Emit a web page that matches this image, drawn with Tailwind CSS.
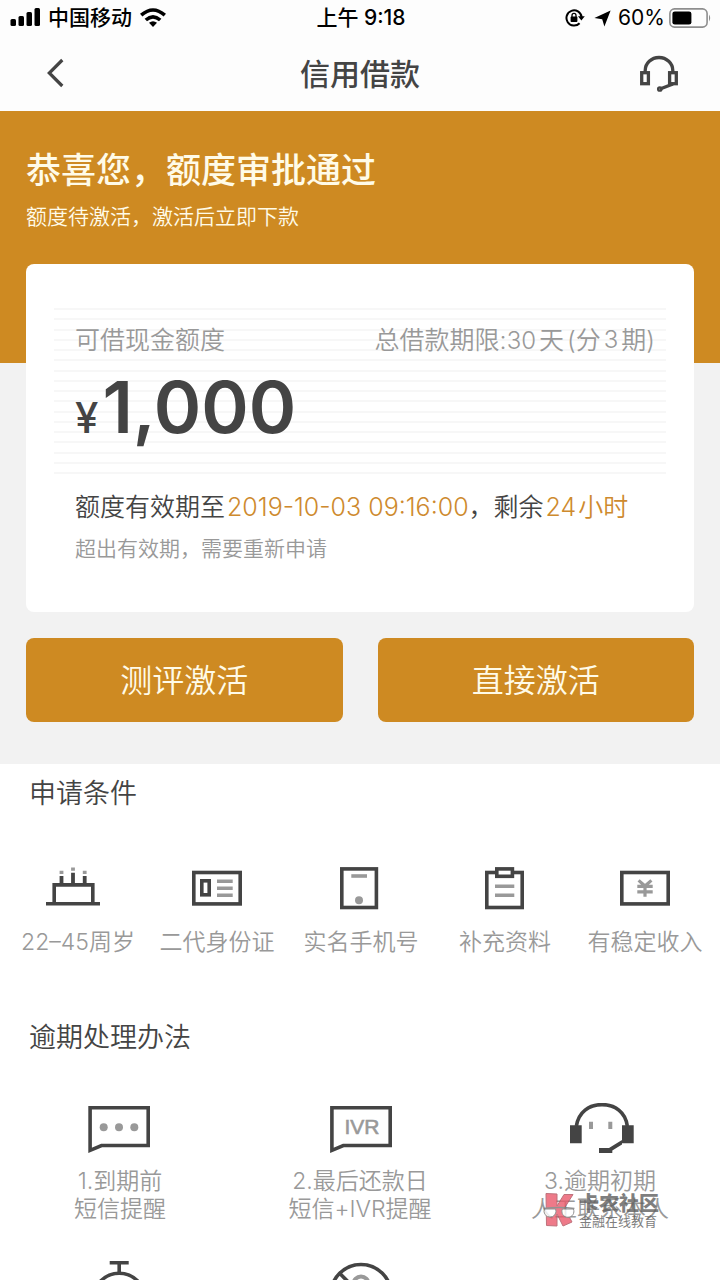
<!DOCTYPE html>
<html lang="zh-CN">
<head>
<meta charset="utf-8">
<meta name="viewport" content="width=device-width, initial-scale=1">
<title>信用借款</title>
<script src="https://cdn.jsdelivr.net/npm/@tailwindcss/browser@4"></script>
</head>
<body class="h-screen overflow-hidden bg-white font-['Inter','Noto_Sans_CJK_SC',sans-serif] font-[350] text-[#444]">

<!-- Status bar -->
<div class="grid h-[34px] grid-cols-3 items-center bg-[#fdfdfd] pt-[2px] pr-[8px] pl-[10px] text-[21px] leading-[28px] font-medium text-black">
  <div class="flex items-center gap-[7px]">
    <svg class="shrink-0" width="31" height="20" viewBox="0 0 31 20" aria-hidden="true">
      <rect x="0.5" y="11" width="5.5" height="7" rx="1.5"/><rect x="8.5" y="8" width="5.5" height="10" rx="1.5"/><rect x="16.5" y="4" width="5.5" height="14" rx="1.5"/><rect x="24.5" y="0" width="5.5" height="18" rx="1.5"/>
    </svg>
    <span class="whitespace-nowrap">中国移动</span>
    <svg class="shrink-0" width="28" height="20" viewBox="0 0 28 20" aria-hidden="true">
      <g fill="none" stroke="#000" stroke-width="3.6"><path d="M2.2 7.2 Q14 -3.2 25.8 7.2"/><path d="M6.8 12 Q14 5.6 21.2 12"/></g>
      <path d="M10 14.8 Q14 11.6 18 14.8 L14 19 Z"/>
    </svg>
  </div>
  <div class="text-center whitespace-nowrap">上午 9:18</div>
  <div class="flex items-center justify-end">
    <svg class="mr-[9px]" width="20" height="18" viewBox="0 0 20 18" aria-hidden="true">
      <path d="M14.6 14.2 A7.6 7.6 0 1 1 16.6 8" fill="none" stroke="#000" stroke-width="2"/>
      <path d="M13 7.2 H19.8 L16.4 11.6 Z"/>
      <rect x="5.6" y="7.6" width="6.8" height="5.4" rx="0.8"/>
      <path d="M7 8 V6.4 a2 2 0 0 1 4 0 V8" fill="none" stroke="#000" stroke-width="1.3"/>
    </svg>
    <svg class="mr-[7px]" width="17" height="17" viewBox="0 0 17 17" aria-hidden="true"><path d="M16.6 0.4 L10.4 16.6 L8.2 9.2 L0.4 8 Z"/></svg>
    <span class="font-normal">60%</span>
    <svg class="ml-[4px]" width="43" height="20" viewBox="0 0 43 20" aria-hidden="true">
      <rect x="0.9" y="0.9" width="37.2" height="18.2" rx="4.6" fill="none" stroke="#8e8e8e" stroke-width="1.6"/>
      <rect x="3.4" y="3.4" width="19" height="13.2" rx="2.4"/>
      <path d="M40 6.6 Q42.4 10 40 13.4 Z" fill="#8e8e8e"/>
    </svg>
  </div>
</div>

<!-- Navigation bar -->
<header class="flex h-[77px] items-center justify-between bg-[#fdfdfd] px-[41px]">
  <button type="button" aria-label="返回" class="w-[40px]">
    <svg width="30" height="30" viewBox="0 0 30 30"><path d="M21.3 2 L8.3 15 L21.3 28" fill="none" stroke="#444" stroke-width="3.2"/></svg>
  </button>
  <h1 class="pt-[2px] text-[30px] leading-[40px] font-medium">信用借款</h1>
  <button type="button" aria-label="客服">
    <svg width="40" height="38" viewBox="0 0 40 38" fill="none" stroke="#444" stroke-width="3.3">
      <rect x="2.7" y="18.7" width="6.7" height="11"/><rect x="30.6" y="18.7" width="6.7" height="11"/>
      <path d="M6.2 18 V16.5 A13.8 13 0 0 1 33.8 16.5 V18"/>
      <path d="M21 35 L34 30"/><circle cx="20.8" cy="35" r="1.2"/>
    </svg>
  </button>
</header>

<main>
  <!-- Approved credit -->
  <section class="bg-[#f2f2f2] pb-[42px]">
    <div class="bg-[#ce8a22] px-[26px] pt-[39px] pb-[132px] text-[#fffbe8]">
      <h2 class="text-[35px] leading-[40px] font-medium">恭喜您，额度审批通过</h2>
      <p class="mt-[13px] text-[21px] leading-[28px]">额度待激活，激活后立即下款</p>
    </div>

    <div class="relative mx-[26px] -mt-[99px] rounded-[8px] bg-white px-[28px] pt-[44px] pb-[49px]">
      <div class="relative h-[166px]">
        <div class="absolute inset-0 flex flex-col justify-between *:h-[2px] *:bg-[#f7f7f7]" aria-hidden="true">
          <div></div><div></div><div></div><div></div><div></div><div></div><div></div><div></div><div></div><div></div><div></div><div></div><div></div><div></div><div></div><div></div><div></div>
        </div>
        <div class="relative pr-[11px] pl-[21px]">
          <div class="flex justify-between pt-[14px] text-[25px] leading-[36px] whitespace-nowrap text-[#999]">
            <span>可借现金额度</span>
            <span class="flex gap-[3px]"><span>总借款期限:<span class="text-[24px]">30</span></span><span>天</span><span>(分</span><span class="text-[24px]">3</span><span>期)</span></span>
          </div>
          <p class="mt-[8px] flex items-baseline gap-[4px] leading-[80px]"><span class="text-[42px] font-medium">¥</span><span class="text-[72px] font-semibold">1,000</span></p>
        </div>
      </div>
      <div class="pt-[15px] pl-[21px]">
        <p class="flex gap-[2px] text-[25px] leading-[36px] whitespace-nowrap"><span>额度有效期至</span><span><span class="text-[#ce8a2e]">2019-10-03 09:16:00</span>，剩余</span><span class="text-[#ce8a2e]">24</span><span class="text-[#ce8a2e]">小时</span></p>
        <p class="mt-[10px] text-[21px] leading-[28px] text-[#999]">超出有效期，需要重新申请</p>
      </div>
    </div>

    <div class="mt-[26px] grid grid-cols-2 gap-[35px] px-[26px]">
      <button type="button" class="h-[84px] rounded-[8px] bg-[#ce8a22] pt-[2px] text-[32px] text-[#fffbe8]">测评激活</button>
      <button type="button" class="h-[84px] rounded-[8px] bg-[#ce8a22] pt-[2px] text-[32px] text-[#fffbe8]">直接激活</button>
    </div>
  </section>

  <!-- Requirements -->
  <section class="pt-[12px]">
    <h2 class="px-[29px] text-[27px] leading-[36px]">申请条件</h2>
    <ul class="mt-[55px] grid grid-cols-[140fr_138fr_150fr_138fr_142fr] pr-[4px] pl-[8px] text-center text-[23px] leading-[28px] whitespace-nowrap text-[#999]">
      <li class="flex flex-col items-center gap-[18px]">
        <svg width="66" height="43" viewBox="0 0 66 43" aria-hidden="true">
          <path d="M1 36.8 H55 M9.2 35 V17.9 H47.8 V35" fill="none" stroke="#444" stroke-width="3.6"/>
          <path d="M16.5 9 V17 M28 5.7 V17 M39.7 9 V17" stroke="#444" stroke-width="3.8"/>
          <path d="M16.5 3.7 V7 M28 0.4 V3.7 M39.7 3.7 V7" stroke="#999" stroke-width="3.8"/>
        </svg>
        <span>22–45周岁</span>
      </li>
      <li class="flex flex-col items-center gap-[18px]">
        <svg width="66" height="43" viewBox="0 0 66 43" fill="none" stroke="#444" stroke-width="3.6" aria-hidden="true">
          <rect x="9.8" y="5.5" width="46.4" height="31.4"/><rect x="17.8" y="13.8" width="7.4" height="14"/>
          <path d="M33 14.3 H48.7 M33 21.3 H48.7 M33 28.2 H48.7" stroke="#999"/>
        </svg>
        <span>二代身份证</span>
      </li>
      <li class="flex flex-col items-center gap-[18px]">
        <svg width="66" height="43" viewBox="0 0 66 43" aria-hidden="true">
          <rect x="13.8" y="1.9" width="34.6" height="38.6" fill="none" stroke="#444" stroke-width="3.6"/>
          <path d="M23.3 9 H39" stroke="#999" stroke-width="3.6"/><circle cx="31" cy="33.3" r="4" fill="#999"/>
        </svg>
        <span>实名手机号</span>
      </li>
      <li class="flex flex-col items-center gap-[18px]">
        <svg width="66" height="43" viewBox="0 0 66 43" stroke="#444" stroke-width="3.6" aria-hidden="true">
          <rect x="14.8" y="5.5" width="35.4" height="35" fill="none"/><rect x="24.8" y="1.9" width="15.6" height="7.4" fill="#fff"/>
          <path d="M23 19.3 H42.3 M23 28.2 H42.3" stroke="#999"/>
        </svg>
        <span>补充资料</span>
      </li>
      <li class="flex flex-col items-center gap-[18px]">
        <svg width="66" height="43" viewBox="0 0 66 43" fill="none" stroke="#444" stroke-width="3.6" aria-hidden="true">
          <rect x="9.8" y="5.5" width="46.4" height="31.4"/>
          <path d="M26.6 13.4 L33 19 L39.4 13.4 M33 18 V29.7 M25.3 19.4 H40.7 M25.3 24.8 H40.7" stroke="#999" stroke-width="3.2"/>
        </svg>
        <span>有稳定收入</span>
      </li>
    </ul>
  </section>

  <!-- Overdue handling -->
  <section class="pt-[64px]">
    <h2 class="px-[29px] text-[27px] leading-[36px]">逾期处理办法</h2>
    <ul class="mt-[47px] grid grid-cols-3 gap-y-[36px] text-center text-[23px] leading-[28px] whitespace-nowrap text-[#999]">
      <li class="flex flex-col items-center gap-[14px]">
        <svg width="68" height="50" viewBox="0 0 68 50" aria-hidden="true">
          <path d="M4.1 4.8 H62.2 V42.5 H15.5 L4.1 47.3 Z" fill="none" stroke="#444" stroke-width="3.6"/>
          <g fill="#999"><circle cx="17.7" cy="24.3" r="4"/><circle cx="33" cy="24.3" r="4"/><circle cx="48.3" cy="24.3" r="4"/></g>
        </svg>
        <p>1.到期前<br>短信提醒</p>
      </li>
      <li class="flex flex-col items-center gap-[14px]">
        <svg width="68" height="50" viewBox="0 0 68 50" role="img" aria-label="IVR">
          <path d="M5.9 4.8 H64.2 V42.5 H17.3 L5.9 47.3 Z" fill="none" stroke="#444" stroke-width="3.6"/>
          <text x="36" y="31" text-anchor="middle" font-size="21" stroke="#999" stroke-width="0.6" class="fill-[#999] font-['Liberation_Sans',sans-serif]">IVR</text>
        </svg>
        <p>2.最后还款日<br>短信+IVR提醒</p>
      </li>
      <li class="relative flex flex-col items-center gap-[14px]">
        <svg width="68" height="50" viewBox="0 0 68 50" aria-hidden="true">
          <path d="M4 22.3 H15.7 V40.3 H4 Z M56 22.3 H67.7 V40.3 H56 Z M33 45 H43 L56 37 V41.5 L46.3 47.5 V50 H33 Z" fill="#444"/>
          <path d="M10.4 23 C12.5 9 23 1.6 36 1.6 S59.5 9 61.3 23" fill="none" stroke="#444" stroke-width="3.6"/>
          <path d="M25 18.7 V26 M44.3 18.7 V26" stroke="#999" stroke-width="4"/>
        </svg>
        <p>3.逾期初期<br>人工联系本人</p>
        <!-- Community watermark -->
        <div class="absolute top-[89px] left-1/2 -ml-[57px] flex items-center gap-[4px] text-left opacity-80">
          <svg width="32" height="36" viewBox="0 0 32 36" aria-hidden="true">
            <path d="M3 1.5 L14 2 L14 14 L21 2.5 L30 2.5 L21.5 16 L29 30 L20 34 L14 22 L14 34 L3.5 33.5 Z" fill="#ea5a6c" stroke="#b0505c" stroke-width="1"/>
            <path d="M1.4 17 H12.6 A6 6 0 1 1 1.4 17 Z M19.4 17 H30.4 A6 6 0 1 1 19.4 17 Z" fill="#fff" stroke="#777" stroke-width="1"/>
            <path d="M0.6 16.5 Q16 14.5 31.4 16.5" fill="none" stroke="#777" stroke-width="1.4"/>
          </svg>
          <div class="text-[#606060]">
            <div class="text-[20px] leading-[22px] font-black">卡农社区</div>
            <div class="text-[13px] leading-[12px] font-normal">金融在线教育</div>
          </div>
        </div>
      </li>
      <li class="flex flex-col items-center">
        <svg width="68" height="70" viewBox="0 0 68 70" fill="none" stroke="#444" stroke-width="3.6" aria-hidden="true">
          <path d="M23.7 3.8 H42.7 M33.2 4 V14"/><circle cx="33.2" cy="40" r="25.8"/>
        </svg>
      </li>
      <li class="flex flex-col items-center">
        <svg width="68" height="70" viewBox="0 0 68 70" fill="none" stroke-width="3.6" aria-hidden="true">
          <circle cx="35" cy="25" r="7.5" stroke="#999" stroke-width="4"/>
          <circle cx="35" cy="35.7" r="30.2" stroke="#444"/><path d="M13.6 14.3 L56.4 57" stroke="#444"/>
        </svg>
      </li>
    </ul>
  </section>
</main>
</body>
</html>
